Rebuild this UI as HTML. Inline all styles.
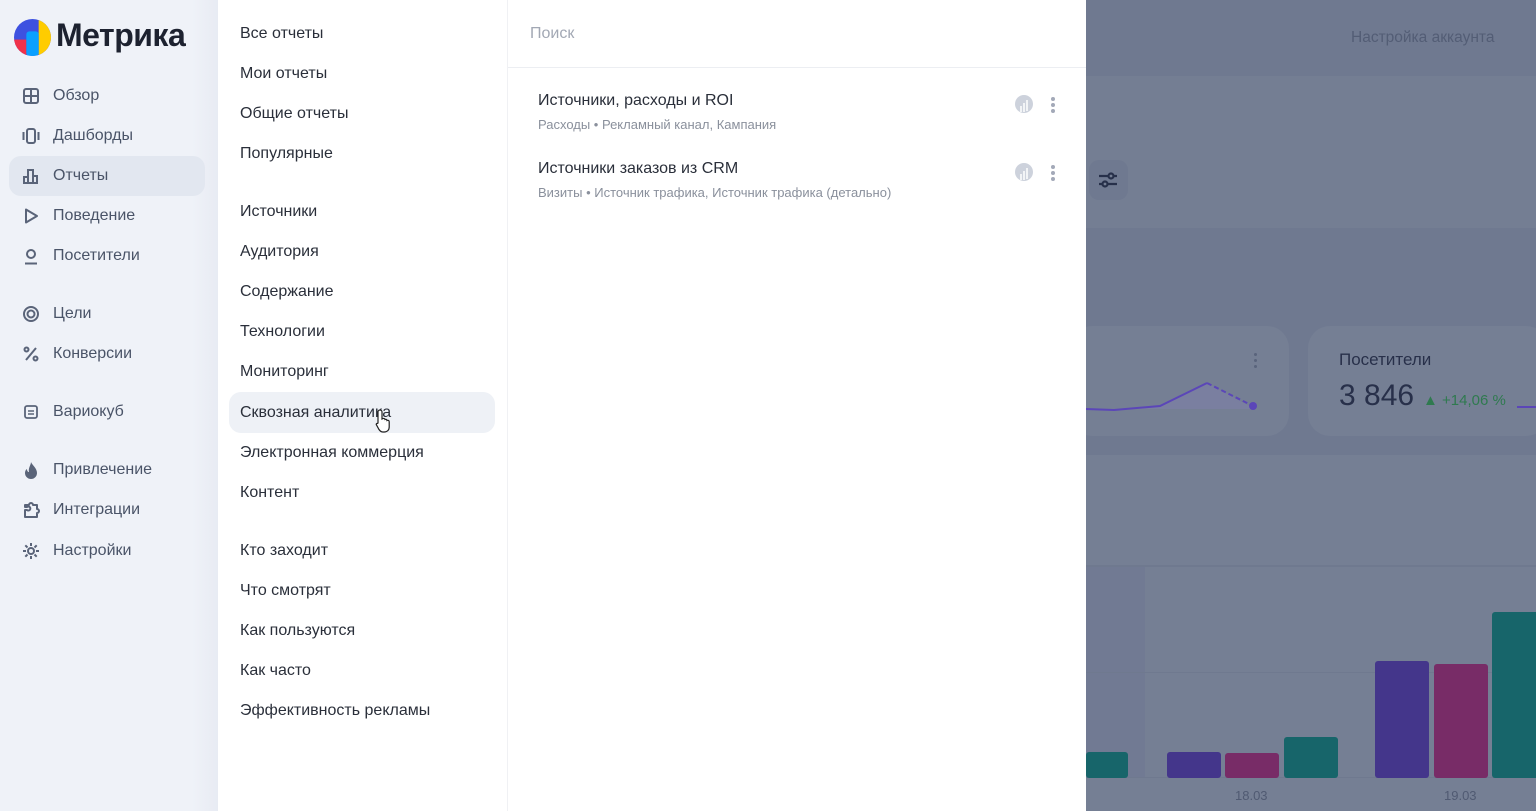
<!DOCTYPE html>
<html><head><meta charset="utf-8"><style>
*{margin:0;padding:0;box-sizing:border-box}
body{width:1536px;height:811px;overflow:hidden;position:relative;font-family:"Liberation Sans","Noto Sans CJK SC",sans-serif;background:#6f7990}
.a{position:absolute}
#side{left:0;top:0;width:218px;height:811px;background:linear-gradient(90deg,#eff2f8 0%,#eff2f8 88%,#e8ebf3 100%)}
.nav{position:absolute;left:22px;font-size:16px;color:#4a5468;display:flex;align-items:center}
.nav svg{width:18px;height:18px;margin-right:13px}
.nav span{line-height:18px}
.m{position:absolute;left:240px;font-size:16px;color:#2a2f3a}
.bar{position:absolute;border-radius:3px}
</style></head><body>
<div class="a" style="left:1086px;top:76px;width:450px;height:152px;background:#747e93"></div>
<div class="a" style="left:1351px;top:29px;font-size:15.5px;color:#535d75">Настройка аккаунта</div>
<div class="a" style="left:1089px;top:160px;width:39px;height:40px;border-radius:10px;background:#6f7990"></div>
<svg class="a" style="left:1097px;top:170px" width="22" height="20" viewBox="0 0 22 20"><g stroke="#27304a" stroke-width="2.2" fill="none"><line x1="2" y1="6" x2="20" y2="6"/><line x1="2" y1="14" x2="20" y2="14"/><circle cx="14" cy="6" r="2.5" fill="#747e93"/><circle cx="8" cy="14" r="2.5" fill="#747e93"/></g></svg>
<div class="a" style="left:1070px;top:326px;width:219px;height:110px;border-radius:22px;background:#757f94"></div>
<div class="a" style="left:1308px;top:326px;width:240px;height:110px;border-radius:22px;background:#757f94"></div>
<div class="a" style="left:1254px;top:353px;width:3px;height:3px;border-radius:2px;background:#5a647c;box-shadow:0 6px 0 #5a647c,0 12px 0 #5a647c"></div>
<svg class="a" style="left:1086px;top:375px" width="180" height="40"><polygon points="0,34 28,35 74,31 121,8 167,33 167,34 74,34" fill="#7a7fa0"/><polyline points="0,34 28,35 74,31 121,8" stroke="#5b46b8" stroke-width="2" fill="none"/><polyline points="121,8 167,31" stroke="#5b46b8" stroke-width="2" stroke-dasharray="5,3" fill="none"/><circle cx="167" cy="31" r="4" fill="#5b46b8"/></svg>
<div class="a" style="left:1339px;top:350px;font-size:17px;color:#28304a">Посетители</div>
<div class="a" style="left:1339px;top:379px;font-size:30px;color:#28304a">3 846</div>
<div class="a" style="left:1423px;top:392px;font-size:15px;color:#2f7a4f">▲ +14,06 %</div>
<div class="a" style="left:1517px;top:406px;width:19px;height:2px;background:#5b46b8"></div>
<div class="a" style="left:1086px;top:455px;width:450px;height:356px;background:#757f94"></div>
<div class="a" style="left:1086px;top:565px;width:450px;height:2px;background:#6f798f"></div>
<div class="a" style="left:1086px;top:567px;width:59px;height:211px;background:#717a93"></div>
<div class="a" style="left:1086px;top:672px;width:450px;height:1px;background:#6f798f"></div>
<div class="a" style="left:1086px;top:777px;width:450px;height:1px;background:#6f798f"></div>
<div class="bar" style="left:1086px;top:752px;width:42px;height:26px;background:#17656a"></div>
<div class="bar" style="left:1167px;top:752px;width:54px;height:26px;background:#44368b"></div>
<div class="bar" style="left:1225px;top:753px;width:54px;height:25px;background:#782c67"></div>
<div class="bar" style="left:1284px;top:737px;width:54px;height:41px;background:#17656a"></div>
<div class="bar" style="left:1375px;top:661px;width:54px;height:117px;background:#44368b"></div>
<div class="bar" style="left:1434px;top:664px;width:54px;height:114px;background:#782c67"></div>
<div class="bar" style="left:1492px;top:612px;width:50px;height:166px;background:#17656a"></div>
<div class="a" style="left:1235px;top:788px;font-size:13px;color:#505a72">18.03</div>
<div class="a" style="left:1444px;top:788px;font-size:13px;color:#505a72">19.03</div>

<div class="a" id="side"></div>
<svg class="a" style="left:14px;top:19px" width="37" height="37" viewBox="0 0 36 36"><defs><clipPath id="c"><circle cx="18" cy="18" r="18"/></clipPath></defs><g clip-path="url(#c)"><rect width="36" height="36" fill="#3d51e0"/><rect x="24" width="12" height="36" fill="#ffcc00"/><rect x="0" y="20" width="12" height="16" fill="#f0324a"/><rect x="12" y="12" width="12" height="24" rx="3" fill="#0aa0ff"/></g></svg>
<div class="a" style="left:56px;top:17px;font-size:32px;font-weight:bold;color:#1d2230;letter-spacing:-0.5px">Метрика</div>
<div class="a" style="left:9px;top:156px;width:196px;height:40px;border-radius:12px;background:#e2e7f0"></div>
<div class="nav" style="top:87px"><svg viewBox="0 0 18 18" fill="none" stroke="#5a6479" stroke-width="2"><rect x="2" y="2" width="14" height="14" rx="2"/><path d="M9 2v14M2 9h14"/></svg><span>Обзор</span></div>
<div class="nav" style="top:127px"><svg viewBox="0 0 18 18" fill="none" stroke="#5a6479" stroke-width="2"><rect x="5" y="2" width="8" height="14" rx="2"/><path d="M1.5 5v8M16.5 5v8"/></svg><span>Дашборды</span></div>
<div class="nav" style="top:167px"><svg viewBox="0 0 18 18" fill="none" stroke="#5a6479" stroke-width="2"><path d="M2 16V10h4V3h5v6h4v7z M6 16V10 M11 16V9"/></svg><span>Отчеты</span></div>
<div class="nav" style="top:207px"><svg viewBox="0 0 18 18" fill="none" stroke="#5a6479" stroke-width="2"><path d="M4 2.5v13l11-6.5z" stroke-linejoin="round"/></svg><span>Поведение</span></div>
<div class="nav" style="top:247px"><svg viewBox="0 0 18 18" fill="none" stroke="#5a6479" stroke-width="2"><circle cx="9" cy="7" r="4"/><path d="M3 16.5h12"/></svg><span>Посетители</span></div>
<div class="nav" style="top:305px"><svg viewBox="0 0 18 18" fill="none" stroke="#5a6479" stroke-width="2"><circle cx="9" cy="9" r="7"/><circle cx="9" cy="9" r="3.5"/></svg><span>Цели</span></div>
<div class="nav" style="top:345px"><svg viewBox="0 0 18 18" fill="none" stroke="#5a6479" stroke-width="2"><circle cx="4.5" cy="4.5" r="2"/><circle cx="13.5" cy="13.5" r="2"/><path d="M14 3L4 15"/></svg><span>Конверсии</span></div>
<div class="nav" style="top:403px"><svg viewBox="0 0 18 18" fill="none" stroke="#5a6479" stroke-width="1.8"><rect x="3" y="3" width="12" height="12" rx="2"/><path d="M6 8h6M6 11h6" stroke-width="1.5"/></svg><span>Вариокуб</span></div>
<div class="nav" style="top:461px"><svg viewBox="0 0 18 18"><path d="M9 1c1 3 6 6 6 11a6 6 0 0 1-12 0c0-3 2-4 2-4 0 2 1 3 2 3-1-4 2-7 2-10z" fill="#5a6479"/></svg><span>Привлечение</span></div>
<div class="nav" style="top:501px"><svg viewBox="0 0 18 18" fill="none" stroke="#5a6479" stroke-width="2"><path d="M3 16V9h2a2 2 0 1 0 0-3H3V4h4a2 2 0 1 1 4 0h4v4a2 2 0 1 1 0 4v4z" stroke-linejoin="round"/></svg><span>Интеграции</span></div>
<div class="nav" style="top:542px"><svg viewBox="0 0 18 18" fill="none" stroke="#5a6479" stroke-width="2"><circle cx="9" cy="9" r="3"/><path d="M9 1v3M9 14v3M1 9h3M14 9h3M3.3 3.3l2.2 2.2M12.5 12.5l2.2 2.2M3.3 14.7l2.2-2.2M12.5 5.5l2.2-2.2"/></svg><span>Настройки</span></div>

<div class="a" style="left:218px;top:0;width:868px;height:811px;background:#fff"></div>
<div class="a" style="left:507px;top:0;width:1px;height:811px;background:#f0f1f4"></div>
<div class="a" style="left:508px;top:67px;width:578px;height:1px;background:#eceef2"></div>
<div class="a" style="left:229px;top:392px;width:266px;height:41px;border-radius:12px;background:#eef1f6"></div>
<div class="m" style="top:25px">Все отчеты</div>
<div class="m" style="top:65px">Мои отчеты</div>
<div class="m" style="top:105px">Общие отчеты</div>
<div class="m" style="top:145px">Популярные</div>
<div class="m" style="top:203px">Источники</div>
<div class="m" style="top:243px">Аудитория</div>
<div class="m" style="top:283px">Содержание</div>
<div class="m" style="top:323px">Технологии</div>
<div class="m" style="top:363px">Мониторинг</div>
<div class="m" style="top:404px">Сквозная аналитика</div>
<div class="m" style="top:444px">Электронная коммерция</div>
<div class="m" style="top:484px">Контент</div>
<div class="m" style="top:542px">Кто заходит</div>
<div class="m" style="top:582px">Что смотрят</div>
<div class="m" style="top:622px">Как пользуются</div>
<div class="m" style="top:662px">Как часто</div>
<div class="m" style="top:702px">Эффективность рекламы</div>
<svg class="a" style="left:375px;top:408px" width="18" height="26" viewBox="0 0 18 26"><path d="M5 2c1 0 2 .8 2 2v7l1-.5c1-.2 1.8.3 2 1 .8-.5 2 0 2 1 1-.5 2.2 0 2.2 1.2V19c0 3-2 5-5 5H8c-2 0-3-1-4-2.5L1.5 17c-.7-1 .5-2.2 1.6-1.4L3 15.5V4c0-1.2 1-2 2-2z" fill="#fff" stroke="#222" stroke-width="1.2"/></svg>

<div class="a" style="left:530px;top:25px;font-size:16px;color:#a2a8b4">Поиск</div>
<div class="a" style="left:538px;top:92px;font-size:16px;color:#2a2f3a">Источники, расходы и ROI</div>
<div class="a" style="left:538px;top:117px;font-size:13px;color:#8a909c">Расходы • Рекламный канал, Кампания</div>
<div class="a" style="left:538px;top:160px;font-size:16px;color:#2a2f3a">Источники заказов из CRM</div>
<div class="a" style="left:538px;top:185px;font-size:13px;color:#8a909c">Визиты • Источник трафика, Источник трафика (детально)</div>
<svg class="a" style="left:1015px;top:95px" width="18" height="18" viewBox="0 0 18 18"><circle cx="9" cy="9" r="9" fill="#cdd2dc"/><path d="M6 17V11M9 17V8M12 16V5" stroke="#fff" stroke-width="1.5"/></svg>
<svg class="a" style="left:1015px;top:163px" width="18" height="18" viewBox="0 0 18 18"><circle cx="9" cy="9" r="9" fill="#cdd2dc"/><path d="M6 17V11M9 17V8M12 16V5" stroke="#fff" stroke-width="1.5"/></svg>
<div class="a" style="left:1051px;top:97px;width:4px;height:4px;border-radius:2px;background:#a3a9b8;box-shadow:0 6px 0 #a3a9b8,0 12px 0 #a3a9b8"></div>
<div class="a" style="left:1051px;top:165px;width:4px;height:4px;border-radius:2px;background:#a3a9b8;box-shadow:0 6px 0 #a3a9b8,0 12px 0 #a3a9b8"></div>
</body></html>
